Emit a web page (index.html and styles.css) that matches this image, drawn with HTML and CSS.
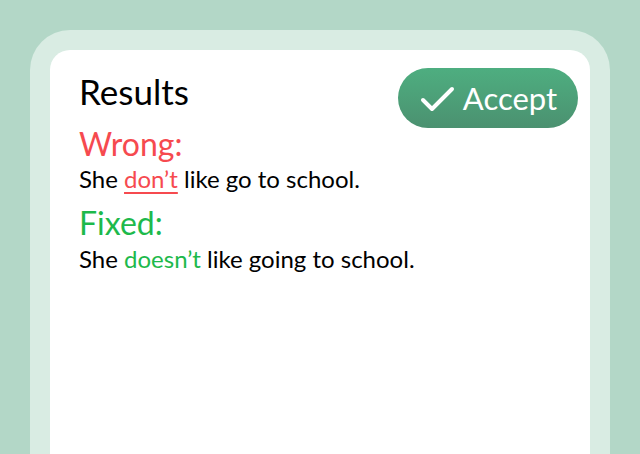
FILE: index.html
```html
<!DOCTYPE html>
<html lang="en">
<head>
<meta charset="utf-8">
<link rel="stylesheet" href="styles.css">
</head>
<body>
<div class="frame">
  <div class="card">
    <div class="header">
      <h1 class="title">Results</h1>
      <button class="accept">
        <svg class="check" width="36" height="28" viewBox="0 0 36 28"><path d="M4 15 L13 24 L33 4" fill="none" stroke="#fff" stroke-width="4" stroke-linecap="round" stroke-linejoin="round"/></svg>
        <span>Accept</span>
      </button>
    </div>
    <div class="label wrong">Wrong:</div>
    <p class="sentence">She <span class="bad">don’t</span> like go to school.</p>
    <div class="label fixed">Fixed:</div>
    <p class="sentence second">She <span class="good">doesn’t</span> like going to school.</p>
  </div>
</div>
</body>
</html>
```
FILE: styles.css
```css
html, body {
  margin: 0;
  padding: 0;
  height: 100%;
  overflow: hidden;
}
body {
  background: #b3d7c7;
  font-family: Lato, "Open Sans", sans-serif;
  color: #000;
}
.frame {
  box-sizing: border-box;
  margin: 30px 30px 0 30px;
  padding: 20px 20px 0 20px;
  background: #d9ece3;
  border-radius: 40px 40px 0 0;
  height: 424px;
}
.card {
  box-sizing: border-box;
  background: #fff;
  border-radius: 20px 20px 0 0;
  height: 100%;
  padding: 18px 12px 0 29px;
}
.header {
  display: flex;
  justify-content: space-between;
  align-items: flex-start;
}
.title {
  margin: 1.5px 0 0 0;
  font-size: 35px;
  font-weight: 400;
  line-height: 42px;
}
.accept {
  width: 180px;
  height: 60px;
  border: none;
  border-radius: 30px;
  background: linear-gradient(#4eae80, #4b9170);
  color: #fff;
  font-family: inherit;
  font-size: 31px;
  display: flex;
  align-items: center;
  justify-content: center;
  gap: 8px;
  padding: 0 0 0 0;
}
.check {
  display: block;
  margin-top: 1px;
}
.label {
  font-size: 32px;
  line-height: 38px;
}
.wrong { color: #f64a4f; margin-top: -3.4px; }
.fixed { color: #1db94b; margin-top: 10px; }
.sentence {
  margin: 1px 0 0 0;
  font-size: 24px;
  line-height: 30px;
}
.second { margin-top: 2px; }
.bad {
  color: #f64a4f;
  text-decoration: underline;
  text-decoration-thickness: 2px;
  text-underline-offset: 4px;
}
.good { color: #1db94b; }
```
